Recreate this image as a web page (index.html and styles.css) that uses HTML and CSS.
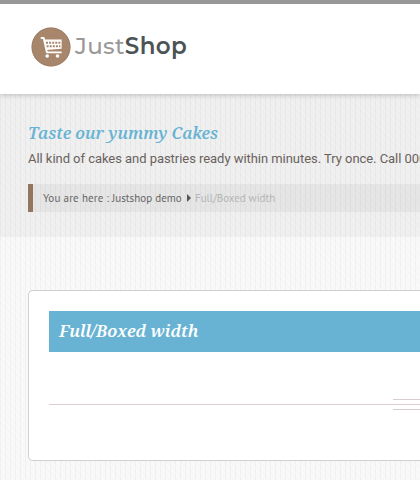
FILE: index.html
```html
<!DOCTYPE html>
<html lang="en">
<head>
<meta charset="utf-8">
<title>JustShop</title>
<link rel="stylesheet" href="styles.css">
</head>
<body>
<header class="header">
  <svg class="logo-icon" viewBox="0 0 40 40" aria-hidden="true">
    <circle cx="20" cy="20" r="19.5" fill="#a8866c"/>
    <circle cx="20" cy="20" r="19" fill="none" stroke="#94775f" stroke-opacity=".55"/>
    <path d="M10.5 11h2.2l3.2 14.4h14" fill="none" stroke="#fff" stroke-width="1.9" stroke-linecap="round" stroke-linejoin="round"/>
    <path d="M13 12.6H30.6v9.2L15.2 23z" fill="#fff"/>
    <path d="M15 15.8h14.4M15.6 19.2h13.8" fill="none" stroke="#a8866c" stroke-width="2" stroke-dasharray="2 1.1"/>
    <circle cx="16.2" cy="29" r="1.8" fill="#fff"/>
    <circle cx="26.5" cy="29" r="1.8" fill="#fff"/>
  </svg>
  <div class="logo-text"><span class="just">Just</span><span class="shop">Shop</span></div>
</header>
<section class="intro">
  <h1 class="tagline">Taste our yummy Cakes</h1>
  <p class="lead">All kind of cakes and pastries ready within minutes. Try once. Call 0000</p>
  <nav class="crumbs"><span class="here">You are here :</span><span class="home">Justshop demo</span><i class="arrow"></i><span class="current">Full/Boxed width</span></nav>
</section>
<main class="panel">
  <h2 class="title"><span class="title-text">Full/Boxed width</span></h2>
  <div class="divider"><span class="ornament"></span></div>
</main>
</body>
</html>
```
FILE: styles.css
```css
* { box-sizing: border-box; }
html { overflow: hidden; }
body {
  margin: 0;
  height: 480px;
  overflow: hidden;
  font-family: Roboto, sans-serif;
  background-color: #f9f9f9;
  background-image:
    repeating-linear-gradient(90deg, rgba(0,0,0,.032) 0 1px, transparent 1px 5px),
    repeating-linear-gradient(45deg, rgba(0,0,0,.008) 0 2px, transparent 2px 5px);
}
.header {
  position: relative;
  display: flex;
  height: 94px;
  padding: 23px 0 0 31px;
  border-top: 4px solid #979797;
  background: #fff;
  box-shadow: 0 1px 5px rgba(0,0,0,.22);
}
.logo-icon { width: 40px; height: 40px; flex: none; }
.logo-text {
  margin: 2px 0 0 4px;
  font: 600 23px/34px Montserrat, Inter, sans-serif;
  letter-spacing: .35px;
  white-space: nowrap;
}
.just { color: #999; font-weight: 500; }
.shop { color: #4c5354; }
.intro {
  height: 143px;
  padding: 27px 0 0 28px;
  overflow: hidden;
  background: rgba(0,0,0,.036);
  white-space: nowrap;
}
.tagline {
  width: max-content;
  margin: 0;
  font: italic 600 17px/24px "Noto Serif", "Droid Serif", "Liberation Serif", serif;
  color: #68b3d3;
  transform: scaleX(.956);
  transform-origin: 0 50%;
}
.lead { margin: 4px 0 0; font-size: 13px; line-height: 20px; letter-spacing: -.045px; color: #69625d; }
.crumbs {
  display: flex;
  align-items: center;
  height: 28px;
  margin-top: 15px;
  padding-left: 10px;
  border-left: 5px solid #94755f;
  background: rgba(0,0,0,.04);
  font: 11px/28px "PT Sans", "Noto Sans", sans-serif;
  color: #666;
}
.here { width: 69px; letter-spacing: .15px; }
.home { width: 71px; letter-spacing: .03px; }
.arrow {
  margin: 0 4px;
  border-left: 4px solid #555;
  border-top: 4px solid transparent;
  border-bottom: 4px solid transparent;
}
.current { color: #b5b5b5; letter-spacing: -.02px; }
.panel {
  height: 171px;
  margin: 53px 0 0 28px;
  padding: 20px 0 20px 20px;
  border: 1px solid #d0d0d0;
  border-right: 0;
  border-radius: 5px 0 0 5px;
  background: #fff;
}
.title {
  height: 41px;
  margin: 0;
  padding-left: 10px;
  background: #68b3d3;
  color: #fff;
  font: italic 600 17px/40px "Noto Serif", "Droid Serif", "Liberation Serif", serif;
}
.title-text {
  display: inline-block;
  transform: scaleX(.984);
  transform-origin: 0 50%;
}
.divider {
  display: grid;
  height: 11px;
  margin-top: 47px;
  background: linear-gradient(#dfcdd1, #dfcdd1) 0 5px / 100% 1px no-repeat;
}
.ornament {
  height: 11px;
  margin-left: 344px;
  border-top: 1px solid #d8cbd1;
  border-bottom: 1px solid #d8cbd1;
}
```
